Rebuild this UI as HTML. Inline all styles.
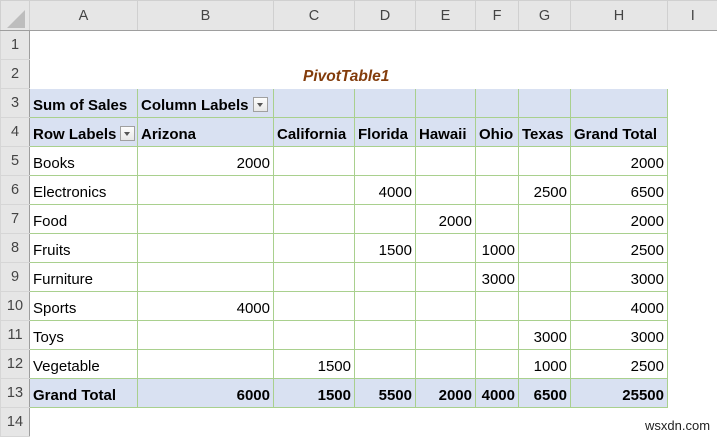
<!DOCTYPE html>
<html><head><meta charset="utf-8"><style>
body{margin:0;width:717px;height:437px;overflow:hidden;background:#fff;font-family:"Liberation Sans",sans-serif;}
table{border-collapse:collapse;table-layout:fixed;position:absolute;left:0;top:0;width:717px;}
td{padding:0 3px 2px 3px;height:26px;font-size:15px;color:#000;white-space:nowrap;overflow:hidden;border:1px solid transparent;vertical-align:bottom;line-height:18px;}
tr.h td{height:29px;padding:0;vertical-align:middle;background:#e6e6e6;color:#444;text-align:center;font-size:14.5px;border:1px solid #d0d0d0;border-bottom:1px solid #9e9e9e;}
td.rh{background:#e6e6e6;color:#444;text-align:center;font-size:14.5px;border:1px solid #d6d6d6;border-right:1px solid #9e9e9e;padding:0;vertical-align:middle;height:28px;}
td.p{border:1px solid #a9d08e;}
td.f{background:#d9e1f2;}
td.b{font-weight:bold;}
td.r{text-align:right;}
.dd{display:inline-block;width:13px;height:13px;border:1px solid #a0a0a0;background:linear-gradient(#fdfdfd,#e8e8e8);vertical-align:-2px;position:relative;margin-left:4px;}
.dd:after{content:"";position:absolute;left:3px;top:5px;border-left:3.5px solid transparent;border-right:3.5px solid transparent;border-top:4px solid #555;}
.corner{position:absolute;left:6px;top:9px;width:0;height:0;border-left:18px solid transparent;border-bottom:18px solid #bdbdbd;}
.title{color:#833c0b;font-weight:bold;font-style:italic;font-size:15.5px;}
</style></head><body>
<table>
<colgroup><col style="width:29px"><col style="width:108px"><col style="width:136px"><col style="width:81px"><col style="width:61px"><col style="width:60px"><col style="width:43px"><col style="width:52px"><col style="width:97px"><col style="width:50px"></colgroup>
<tr class="h"><td style="position:relative"><div class="corner"></div></td><td>A</td><td>B</td><td>C</td><td>D</td><td>E</td><td>F</td><td>G</td><td>H</td><td style="border-right:none">I</td></tr>
<tr><td class="rh">1</td><td></td><td></td><td></td><td></td><td></td><td></td><td></td><td></td><td></td></tr>
<tr><td class="rh">2</td><td></td><td></td><td colspan="3" style="text-align:left;padding-left:29px;overflow:visible"><span class="title">PivotTable1</span></td><td></td><td></td><td></td><td></td></tr>
<tr><td class="rh">3</td><td class="p f b">Sum of Sales</td><td class="p f b">Column Labels<span class="dd"></span></td><td class="p f"></td><td class="p f"></td><td class="p f"></td><td class="p f"></td><td class="p f"></td><td class="p f"></td><td></td></tr>
<tr><td class="rh">4</td><td class="p f b">Row Labels<span class="dd"></span></td><td class="p f b">Arizona</td><td class="p f b">California</td><td class="p f b">Florida</td><td class="p f b">Hawaii</td><td class="p f b">Ohio</td><td class="p f b">Texas</td><td class="p f b">Grand Total</td><td></td></tr>
<tr><td class="rh">5</td><td class="p">Books</td><td class="p r">2000</td><td class="p"></td><td class="p"></td><td class="p"></td><td class="p"></td><td class="p"></td><td class="p r">2000</td><td></td></tr>
<tr><td class="rh">6</td><td class="p">Electronics</td><td class="p"></td><td class="p"></td><td class="p r">4000</td><td class="p"></td><td class="p"></td><td class="p r">2500</td><td class="p r">6500</td><td></td></tr>
<tr><td class="rh">7</td><td class="p">Food</td><td class="p"></td><td class="p"></td><td class="p"></td><td class="p r">2000</td><td class="p"></td><td class="p"></td><td class="p r">2000</td><td></td></tr>
<tr><td class="rh">8</td><td class="p">Fruits</td><td class="p"></td><td class="p"></td><td class="p r">1500</td><td class="p"></td><td class="p r">1000</td><td class="p"></td><td class="p r">2500</td><td></td></tr>
<tr><td class="rh">9</td><td class="p">Furniture</td><td class="p"></td><td class="p"></td><td class="p"></td><td class="p"></td><td class="p r">3000</td><td class="p"></td><td class="p r">3000</td><td></td></tr>
<tr><td class="rh">10</td><td class="p">Sports</td><td class="p r">4000</td><td class="p"></td><td class="p"></td><td class="p"></td><td class="p"></td><td class="p"></td><td class="p r">4000</td><td></td></tr>
<tr><td class="rh">11</td><td class="p">Toys</td><td class="p"></td><td class="p"></td><td class="p"></td><td class="p"></td><td class="p"></td><td class="p r">3000</td><td class="p r">3000</td><td></td></tr>
<tr><td class="rh">12</td><td class="p">Vegetable</td><td class="p"></td><td class="p r">1500</td><td class="p"></td><td class="p"></td><td class="p"></td><td class="p r">1000</td><td class="p r">2500</td><td></td></tr>
<tr><td class="rh">13</td><td class="p f b">Grand Total</td><td class="p f b r">6000</td><td class="p f b r">1500</td><td class="p f b r">5500</td><td class="p f b r">2000</td><td class="p f b r">4000</td><td class="p f b r">6500</td><td class="p f b r">25500</td><td></td></tr>
<tr><td class="rh">14</td><td></td><td></td><td></td><td></td><td></td><td></td><td></td><td></td><td></td></tr>
</table>
<div style="position:absolute;left:645px;top:418px;font-size:13px;color:#222;">wsxdn.com</div>
</body></html>
